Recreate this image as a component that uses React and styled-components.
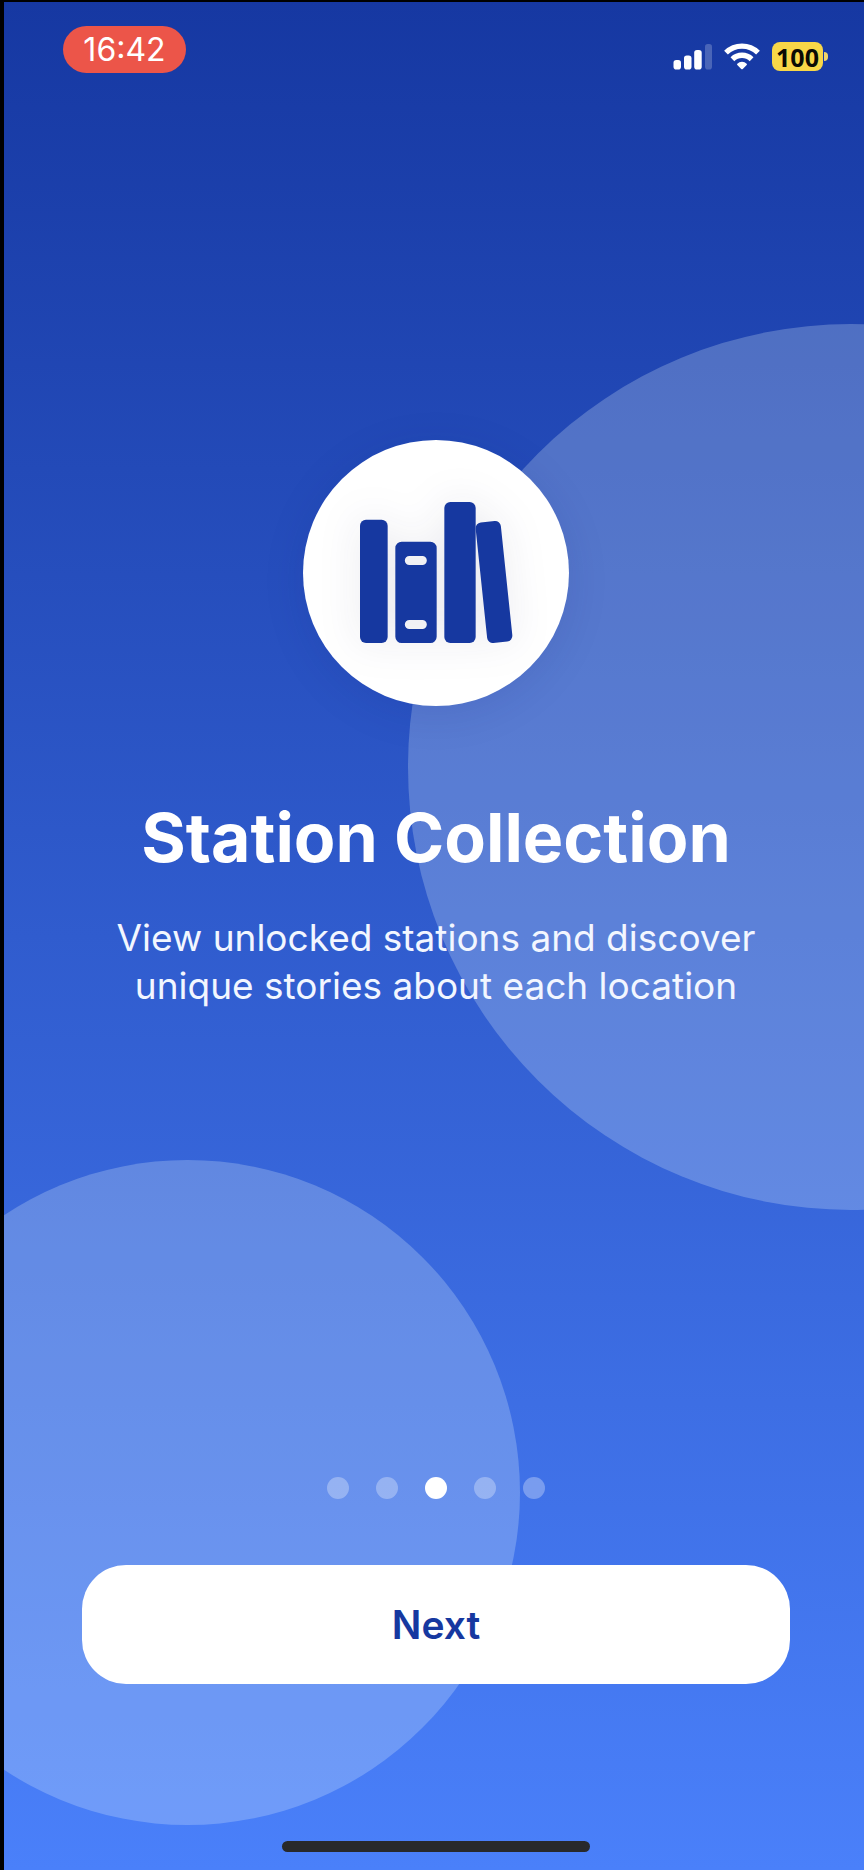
import React from "react";
import styled, { createGlobalStyle } from "styled-components";

const GlobalStyle = createGlobalStyle`
  * { box-sizing: border-box; }
  body {
    margin: 0;
    background: #000;
    font-family: Inter, "Liberation Sans", sans-serif;
  }
`;

const Screen = styled.main`
  position: relative;
  overflow: hidden;
  min-height: 100vh;
  border-top: 2px solid #000;
  border-left: 4px solid #000;
  padding-left: 4px;
  display: flex;
  flex-direction: column;
  background: linear-gradient(180deg, #1638a2 0%, #4a80fa 100%);
  color: #fff;
`;

const Bubble = styled.div`
  position: absolute;
  width: ${(p) => p.$size}px;
  height: ${(p) => p.$size}px;
  border-radius: 50%;
  background: rgba(240, 255, 255, 0.23);
`;

const RightBubble = styled(Bubble)`
  top: 322px;
  right: -430px;
`;

const LeftBubble = styled(Bubble)`
  bottom: 45px;
  left: -149px;
`;

const StatusBar = styled.header`
  position: relative;
  display: flex;
  align-items: center;
  justify-content: space-between;
  padding: 24px 36px 0 55px;
`;

const TimePill = styled.time`
  display: flex;
  align-items: center;
  justify-content: center;
  width: 123px;
  height: 47px;
  border-radius: 24px;
  background: #ec5549;
  font-size: 32px;
  line-height: 40px;
`;

const StatusIcons = styled.div`
  display: flex;
  align-items: center;
  gap: 12px;
  padding-top: 14px;
`;

const Battery = styled.div`
  display: flex;
  align-items: center;
  gap: 1px;
`;

const BatteryBody = styled.div`
  display: flex;
  align-items: center;
  justify-content: center;
  width: 51px;
  height: 29px;
  border-radius: 8px;
  background: #f8d748;
  color: #0b0b05;
  font: 700 25px/28px "Noto Sans", sans-serif;
`;

const BatteryCap = styled.div`
  width: 4px;
  height: 9px;
  border-radius: 0 4px 4px 0;
  background: #f2d56a;
`;

const Hero = styled.section`
  position: relative;
  flex: 1;
  display: flex;
  flex-direction: column;
  align-items: center;
  justify-content: center;
  padding: 0 72px 100px;
  text-align: center;
`;

const IconDisc = styled.div`
  width: 266px;
  height: 266px;
  border-radius: 50%;
  background: #fff;
  box-shadow: 0 8px 40px rgba(20, 40, 120, 0.13);
  svg {
    display: block;
    filter: drop-shadow(0 0 20px rgba(20, 20, 80, 0.09));
  }
`;

const Title = styled.h1`
  margin: 87px 0 0;
  font-size: 68px;
  line-height: 88px;
  font-weight: 700;
`;

const Description = styled.p`
  margin: 33px 0 0;
  max-width: 680px;
  font-size: 37px;
  line-height: 48px;
  color: #f2f6ff;
`;

const Footer = styled.footer`
  position: relative;
  display: flex;
  flex-direction: column;
  align-items: center;
  padding: 0 74px 18px;
`;

const Dots = styled.div`
  display: flex;
  gap: 27px;
  margin-bottom: 66px;
`;

const Dot = styled.span`
  width: 22px;
  height: 22px;
  border-radius: 50%;
  background: ${(p) => (p.$active ? "#fff" : "rgba(255, 255, 255, 0.3)")};
`;

const NextButton = styled.button`
  width: 100%;
  height: 119px;
  border: 0;
  border-radius: 44px;
  background: #fff;
  color: #1638a0;
  font: 600 39px/48px Inter, sans-serif;
  cursor: pointer;
`;

const HomeIndicator = styled.div`
  width: 308px;
  height: 11px;
  margin-top: 157px;
  border-radius: 6px;
  background: #28292b;
`;

function BooksIcon() {
  return (
    <svg width="266" height="266" viewBox="40 30 798 798" fill="#1638a0" aria-hidden="true">
      <rect x="211" y="269" width="83" height="370" rx="18" />
      <path
        fillRule="evenodd"
        d="M336 335h86a19 19 0 0 1 19 19v266a19 19 0 0 1-19 19h-86a19 19 0 0 1-19-19V354a19 19 0 0 1 19-19zM359 378a13 13 0 0 0 0 27h39a13 13 0 0 0 0-27zM359 570a13 13 0 0 0 0 27h39a13 13 0 0 0 0-27z"
      />
      <rect x="464" y="216" width="94" height="423" rx="18" />
      <rect x="575" y="274" width="76" height="364" rx="17" transform="rotate(-6 613 456)" />
    </svg>
  );
}

function SignalIcon() {
  return (
    <svg width="39" height="27" viewBox="0 0 39 27" fill="#fff" aria-hidden="true">
      <rect x="0.5" y="17" width="7.5" height="9.5" rx="2.8" />
      <rect x="11" y="12.5" width="7.5" height="14" rx="2.8" />
      <rect x="21.2" y="7" width="7.5" height="19.5" rx="2.8" />
      <rect x="32" y="1" width="7" height="25.5" rx="2.8" opacity="0.22" />
    </svg>
  );
}

function WifiIcon() {
  return (
    <svg width="36" height="27" viewBox="0 0 36 27" aria-hidden="true">
      <g fill="none" stroke="#fff" strokeWidth="5.4">
        <path d="M2 9.6a23 23 0 0 1 32 0" />
        <path d="M8.4 16.2a13.8 13.8 0 0 1 19.2 0" />
      </g>
      <path
        d="M13.3 20.7a6.9 6.9 0 0 1 9.4 0q.6.6 0 1.2l-3.9 4q-.8.8-1.6 0l-3.9-4q-.6-.6 0-1.2z"
        fill="#fff"
      />
    </svg>
  );
}

const PAGES = [0, 1, 2, 3, 4];

export default function App() {
  const active = 2;
  return (
    <>
      <GlobalStyle />
      <Screen>
        <RightBubble $size={886} />
        <LeftBubble $size={665} />
        <StatusBar>
          <TimePill>16:42</TimePill>
          <StatusIcons>
            <SignalIcon />
            <WifiIcon />
            <Battery>
              <BatteryBody>100</BatteryBody>
              <BatteryCap />
            </Battery>
          </StatusIcons>
        </StatusBar>
        <Hero>
          <IconDisc>
            <BooksIcon />
          </IconDisc>
          <Title>Station Collection</Title>
          <Description>View unlocked stations and discover unique stories about each location</Description>
        </Hero>
        <Footer>
          <Dots>
            {PAGES.map((page) => (
              <Dot key={page} $active={page === active} />
            ))}
          </Dots>
          <NextButton type="button">Next</NextButton>
          <HomeIndicator />
        </Footer>
      </Screen>
    </>
  );
}
